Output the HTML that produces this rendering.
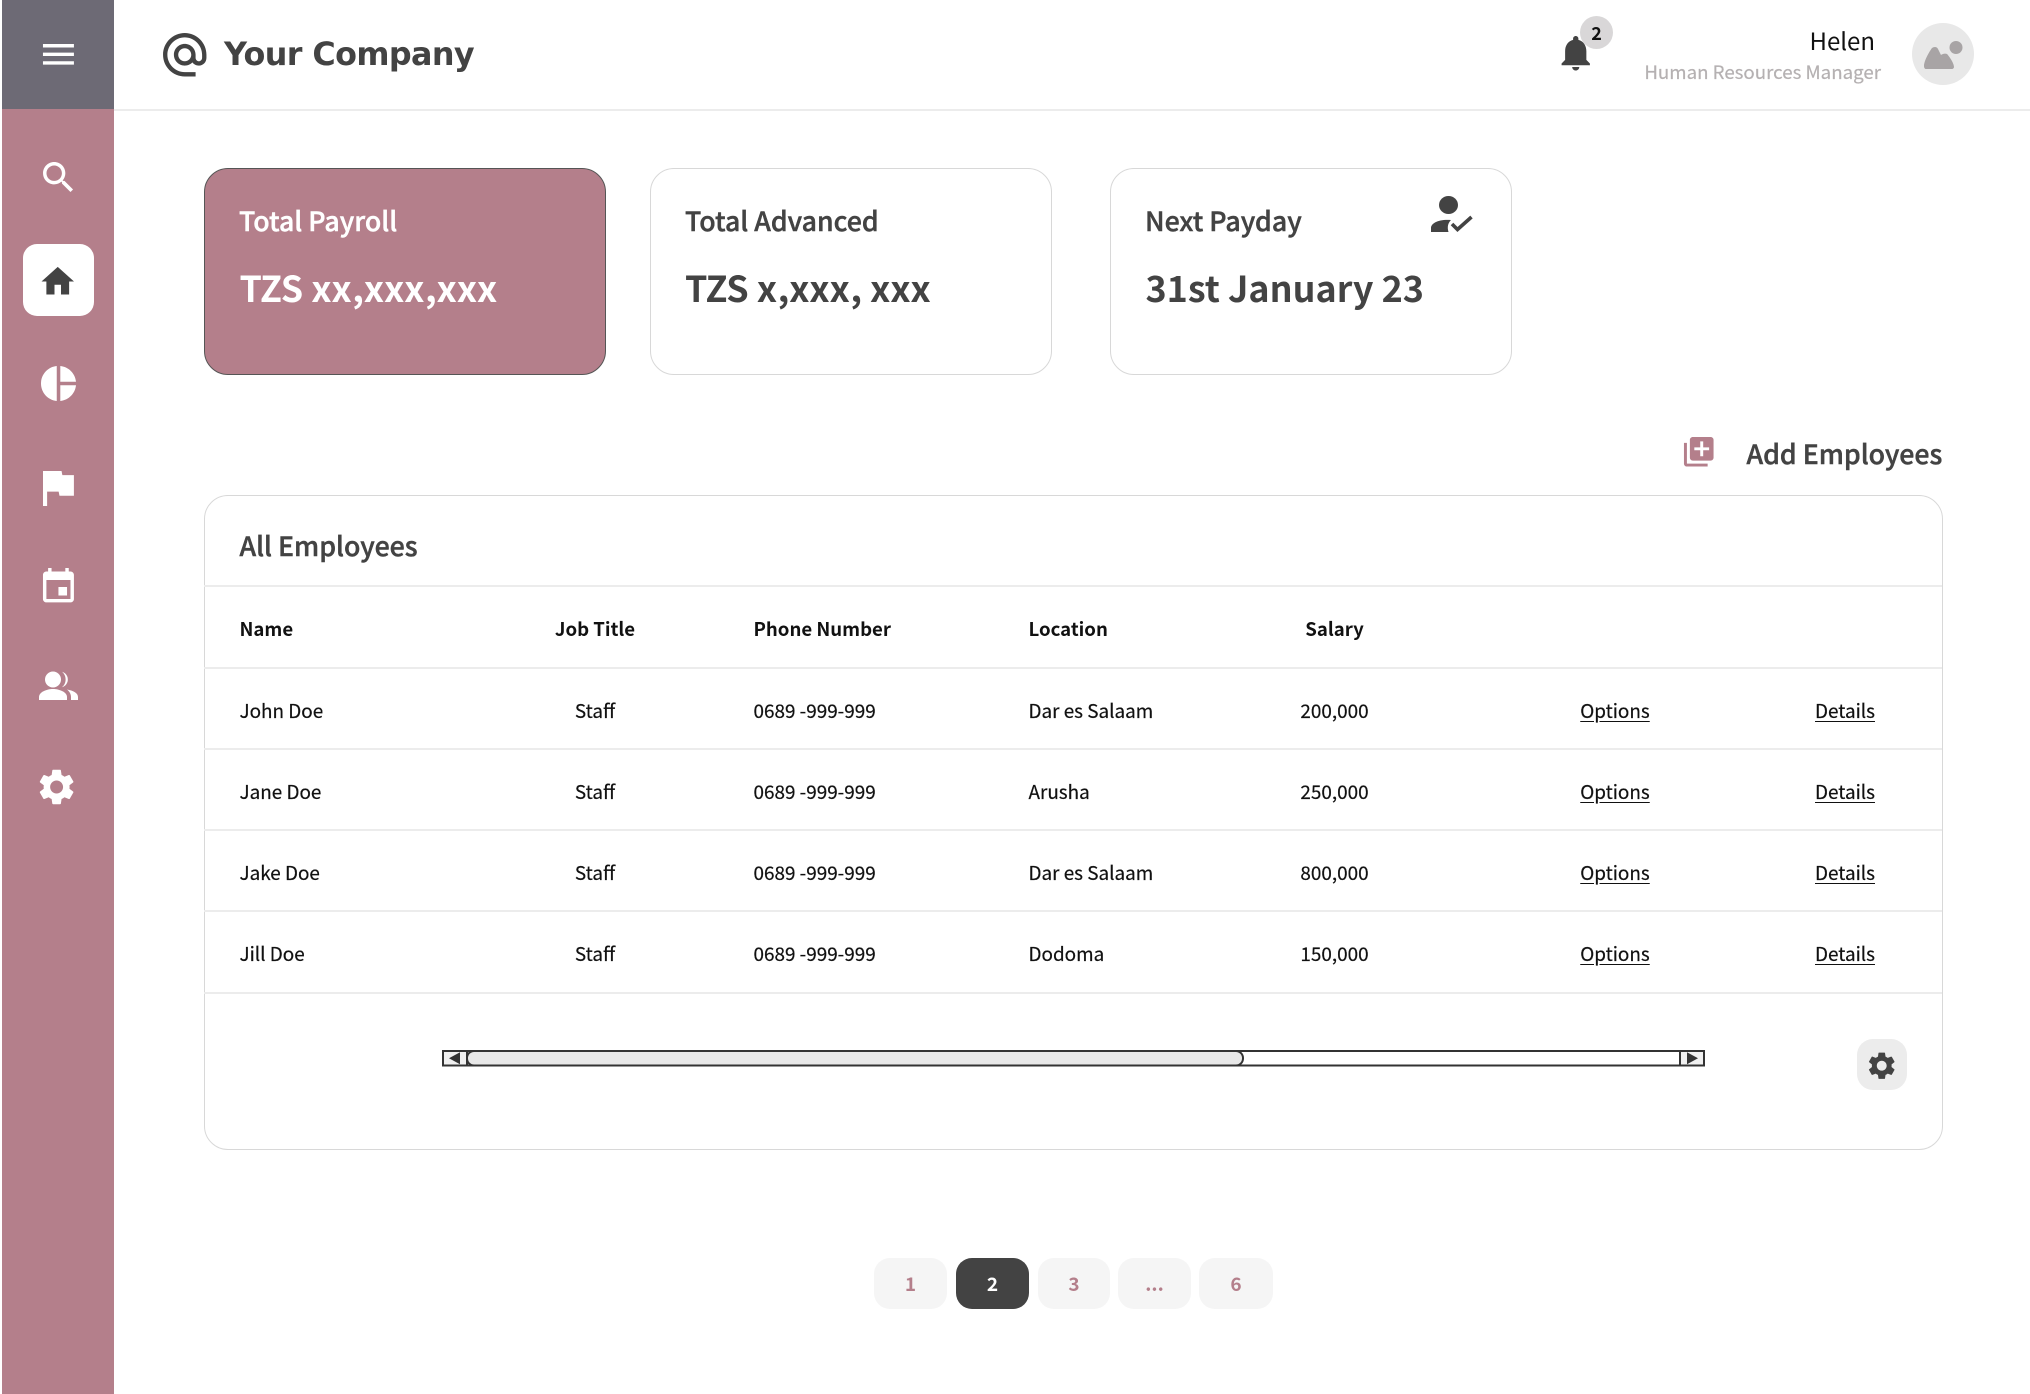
<!DOCTYPE html>
<html lang="en"><head><meta charset="utf-8"><title>Payroll</title>
<style>
html,body{margin:0;padding:0;background:#fff}
#p{position:relative;width:2030px;height:1394px;overflow:hidden;background:#fff;font-family:"Liberation Sans","Noto Sans CJK JP",sans-serif}
#p div{position:absolute;box-sizing:border-box}
.t{font-family:"Noto Sans CJK JP","Liberation Sans",sans-serif;line-height:1;white-space:nowrap;color:#111}
.c{transform:translateX(-50%)}
.h{font-size:26.7px;color:#434343;font-weight:500;-webkit-text-stroke:.45px #434343}
.b{font-size:35.900px;color:#434343;font-weight:700}
.r{font-size:18.900px;-webkit-text-stroke:.2px #111}
.hd{font-size:18.6px;font-weight:700}
.u{text-decoration:underline;text-underline-offset:3px}
.card{border:1.5px solid #d8d8d8;border-radius:24px;background:#fff}
.ln{left:203.500px;width:1738px;height:2px;background:#ececec}
.pg{top:1258px;height:51px;border-radius:16px;background:#f5f5f5;color:#b47f8b;font-family:"Noto Sans CJK JP",sans-serif;font-weight:700;font-size:19px;line-height:51px;text-align:center}
</style></head><body><div id="p">
<div style="left:1.500px;top:0;width:112.500px;height:1394px;background:#b47f8b"></div>
<div style="left:1.500px;top:0;width:112.500px;height:109px;background:#6d6a75"></div>
<div style="left:114px;top:109px;width:1916px;height:2px;background:#ececec"></div>
<div style="left:23px;top:244px;width:71px;height:72px;background:#fff;border-radius:14px"></div>

<div class="card" style="left:203.500px;top:168px;width:402px;height:207px;background:#b47f8b;border-color:#555"></div>
<div class="card" style="left:649.500px;top:168px;width:402px;height:206.500px"></div>
<div class="card" style="left:1110px;top:168px;width:402px;height:206.500px"></div>
<div class="card" style="left:203.500px;top:495px;width:1739px;height:655px"></div>
<div class="ln" style="top:584.500px"></div><div class="ln" style="top:667px"></div><div class="ln" style="top:747.500px"></div><div class="ln" style="top:829px"></div><div class="ln" style="top:910px"></div><div class="ln" style="top:992px"></div>

<svg width="2030" height="1394" viewBox="0 0 2030 1394" style="position:absolute;left:0;top:0">
<g fill="#fff">
<path transform="translate(37.8 33.7) scale(1.72)" d="M3 18h18v-2H3v2zm0-5h18v-2H3v2zm0-7v2h18V6H3z"/>
<path transform="translate(37.9 156.9) scale(1.715)" d="M15.5 14h-.79l-.28-.27C15.41 12.59 16 11.11 16 9.5 16 5.91 13.09 3 9.5 3S3 5.91 3 9.5 5.91 16 9.5 16c1.61 0 3.09-.59 4.23-1.57l.27.28v.79l5 4.99L20.49 19l-4.99-5zm-6 0C7.01 14 5 11.99 5 9.5S7.01 5 9.5 5 14 7.01 14 9.5 11.99 14 9.5 14z"/>
<path transform="translate(37.5 362.5) scale(1.75)" d="M11 2v20c-5.07-.5-9-4.79-9-10s3.93-9.5 9-10zm2.03 0v8.99H22c-.47-4.74-4.24-8.52-8.97-8.99zm0 11.01V22c4.74-.47 8.5-4.25 8.97-8.99h-8.97z"/>
<path transform="translate(32.7 462.8) scale(2.06)" d="M14.4 6L14 4H5v17h2v-7h5.6l.4 2h7V6z"/>
<path transform="translate(37.8 566.3) scale(1.72)" d="M17 12h-5v5h5v-5zM16 1v2H8V1H6v2H5c-1.11 0-1.99.9-1.99 2L3 19c0 1.1.89 2 2 2h14c1.1 0 2-.9 2-2V5c0-1.1-.9-2-2-2h-1V1h-2zm3 18H5V8h14v11z"/>
<circle cx="53" cy="679.5" r="8"/>
<path d="M39 700v-3c0-5 8-8 14-8s14 3 14 8v3z"/>
<path d="M62 671.8a8 8 0 0 1 0 15.4c2.4-2 3.6-4.6 3.6-7.7s-1.2-5.7-3.6-7.7zM67 689.5c6 1 11 3.500 11 7.500v3h-7v-3c0-3-1.500-5.500-4-7.500z"/>
<path transform="translate(35 765.4) scale(1.8)" d="M19.14 12.94c.04-.3.06-.61.06-.94 0-.32-.02-.64-.07-.94l2.03-1.58c.18-.14.23-.41.12-.61l-1.92-3.32c-.12-.22-.37-.29-.59-.22l-2.39.96c-.5-.38-1.03-.7-1.62-.94l-.36-2.54c-.04-.24-.24-.41-.48-.41h-3.84c-.24 0-.43.17-.47.41l-.36 2.54c-.59.24-1.13.57-1.62.94l-2.39-.96c-.22-.08-.47 0-.59.22L2.74 8.87c-.12.21-.08.47.12.61l2.03 1.58c-.05.3-.09.63-.09.94s.02.64.07.94l-2.03 1.58c-.18.14-.23.41-.12.61l1.92 3.32c.12.22.37.29.59.22l2.39-.96c.5.38 1.03.7 1.62.94l.36 2.54c.05.24.24.41.48.41h3.84c.24 0 .44-.17.47-.41l.36-2.54c.59-.24 1.13-.56 1.62-.94l2.39.96c.22.08.47 0 .59-.22l1.92-3.32c.12-.22.07-.47-.12-.61l-2.01-1.58zM12 15.6c-1.98 0-3.6-1.62-3.6-3.6s1.62-3.6 3.6-3.6 3.6 1.62 3.6 3.6-1.62 3.6-3.6 3.6z"/>
</g>
<g fill="#434343">
<path transform="translate(38.25 262) scale(1.625)" d="M10 20v-6h4v6h5v-8h3L12 3 2 12h3v8z"/>
<path transform="translate(158.7 28.700) scale(2.17)" d="M12 2C6.48 2 2 6.48 2 12s4.48 10 10 10h5v-2h-5c-4.34 0-8-3.66-8-8s3.66-8 8-8 8 3.66 8 8v1.43c0 .79-.71 1.57-1.5 1.57s-1.5-.78-1.5-1.57V12c0-2.76-2.24-5-5-5s-5 2.24-5 5 2.24 5 5 5c1.38 0 2.64-.56 3.54-1.47.65.89 1.77 1.47 2.96 1.47 1.97 0 3.5-1.6 3.5-3.57V12c0-5.52-4.48-10-10-10zm0 13c-1.66 0-3-1.34-3-3s1.34-3 3-3 3 1.34 3 3-1.34 3-3 3z"/>
<path transform="translate(1554.500 31.600) scale(1.77)" d="M12 22c1.1 0 2-.9 2-2h-4c0 1.1.89 2 2 2zm6-6v-5c0-3.07-1.64-5.64-4.5-6.32V4c0-.83-.67-1.5-1.5-1.5s-1.5.67-1.5 1.5v.68C7.63 5.36 6 7.92 6 11v5l-2 2v1h16v-1l-2-2z"/>
<ellipse cx="1448.500" cy="205" rx="9.500" ry="9"/>
<path d="M1431 232v-4c0-5 8-9 20-8-3 3-4 7-2.500 12z"/>
<path d="M1452 224l5.500 5.500 14-12.500" fill="none" stroke="#434343" stroke-width="3.600"/>
</g>
<path fill="#b47f8b" transform="translate(1681 434) scale(1.48)" d="M4 6H2v14c0 1.100.9 2 2 2h14v-2H4V6zm16-4H8c-1.100 0-2 .9-2 2v12c0 1.100.9 2 2 2h12c1.100 0 2-.9 2-2V4c0-1.100-.9-2-2-2zm-1 9h-4v4h-2v-4H9V9h4V5h2v4h4v2z"/>
<circle cx="1596.500" cy="32.500" r="16.500" fill="#d9d7d8"/>
<circle cx="1943" cy="54" r="31" fill="#e8e8e8"/>
<g fill="#a8a4a5"><circle cx="1956" cy="47.500" r="6.500"/><path d="M1924 66c0-5 5-14 8-18 2-1.500 5-1.500 6 1l3 6c1-1 4-2 6-1 2 2 7 9 7 13 0 1-1 2-2 2h-26c-1 0-2-1-2-3z"/></g>
<rect x="1857" y="1039" width="50" height="51" rx="16" fill="#ececec"/>
<path fill="#434343" transform="translate(1865.3 1049.300) scale(1.37)" d="M19.14 12.94c.04-.3.06-.61.06-.94 0-.32-.02-.64-.07-.94l2.03-1.58c.18-.14.23-.41.12-.61l-1.92-3.32c-.12-.22-.37-.29-.59-.22l-2.39.96c-.5-.38-1.03-.7-1.62-.94l-.36-2.54c-.04-.24-.24-.41-.48-.41h-3.84c-.24 0-.43.17-.47.41l-.36 2.54c-.59.24-1.13.57-1.62.94l-2.39-.96c-.22-.08-.47 0-.59.22L2.74 8.87c-.12.21-.08.47.12.61l2.03 1.58c-.05.3-.09.63-.09.94s.02.64.07.94l-2.03 1.58c-.18.14-.23.41-.12.61l1.92 3.32c.12.22.37.29.59.22l2.39-.96c.5.38 1.03.7 1.62.94l.36 2.54c.05.24.24.41.48.41h3.84c.24 0 .44-.17.47-.41l.36-2.54c.59-.24 1.13-.56 1.62-.94l2.39.96c.22.08.47 0 .59-.22l1.92-3.32c.12-.22.07-.47-.12-.61l-2.01-1.58zM12 15.6c-1.98 0-3.6-1.62-3.6-3.6s1.62-3.6 3.6-3.6 3.6 1.62 3.6 3.6-1.62 3.6-3.6 3.6z"/>
<!-- scrollbar -->
<rect x="443" y="1051" width="1261" height="14.500" fill="#fff" stroke="#333" stroke-width="2"/>
<rect x="443" y="1051" width="24" height="14.500" fill="#f0f0f0" stroke="#333" stroke-width="2"/>
<rect x="1680" y="1051" width="24" height="14.500" fill="#f0f0f0" stroke="#333" stroke-width="2"/>
<path d="M449 1058.300l11-6v12z M1698 1058.300l-11-6v12z" fill="#333"/>
<rect x="467" y="1051" width="776" height="14.500" rx="7" fill="#e8e8e8" stroke="#333" stroke-width="2"/>
</svg>

<div class="t" style="left:224px;top:37px;font-family:'DejaVu Sans',sans-serif;font-weight:700;font-size:31.800px;color:#434343;line-height:36px;letter-spacing:-.6px">Your Company</div>
<div class="t" style="right:155px;top:28px;font-size:24px">Helen</div>
<div class="t" style="right:149px;top:63px;font-size:18.700px;color:#b5b1b2;-webkit-text-stroke:.2px #b5b1b2">Human Resources Manager</div>
<div class="t c" style="left:1596.500px;top:24px;font-size:18px;font-weight:700">2</div>

<div class="t h" style="left:239px;top:207px;color:#fff;-webkit-text-stroke:.45px #fff">Total Payroll</div>
<div class="t b" style="left:239.500px;top:269.500px;color:#fff">TZS xx,xxx,xxx</div>
<div class="t h" style="left:685px;top:207px">Total Advanced</div>
<div class="t b" style="left:685px;top:269.500px">TZS x,xxx, xxx</div>
<div class="t h" style="left:1145px;top:207px">Next Payday</div>
<div class="t b" style="left:1145.500px;top:269.500px">31st January 23</div>
<div class="t h" style="left:1746.500px;top:440px">Add Employees</div>
<div class="t h" style="left:239.500px;top:532px">All Employees</div>

<div class="t hd" style="left:239.500px;top:620px">Name</div>
<div class="t hd c" style="left:595px;top:620px">Job Title</div>
<div class="t hd" style="left:753.500px;top:620px">Phone Number</div>
<div class="t hd" style="left:1028.500px;top:620px">Location</div>
<div class="t hd c" style="left:1334.500px;top:620px">Salary</div>

<div class="t r" style="left:239.500px;top:702px">John Doe</div><div class="t r c" style="left:595px;top:702px">Staff</div><div class="t r" style="left:753.500px;top:702px">0689 -999-999</div><div class="t r" style="left:1028.500px;top:702px">Dar es Salaam</div><div class="t r c" style="left:1334.500px;top:702px">200,000</div><div class="t r c u" style="left:1615px;top:702px">Options</div><div class="t r c u" style="left:1845px;top:702px">Details</div>
<div class="t r" style="left:239.500px;top:783px">Jane Doe</div><div class="t r c" style="left:595px;top:783px">Staff</div><div class="t r" style="left:753.500px;top:783px">0689 -999-999</div><div class="t r" style="left:1028.500px;top:783px">Arusha</div><div class="t r c" style="left:1334.500px;top:783px">250,000</div><div class="t r c u" style="left:1615px;top:783px">Options</div><div class="t r c u" style="left:1845px;top:783px">Details</div>
<div class="t r" style="left:239.500px;top:864px">Jake Doe</div><div class="t r c" style="left:595px;top:864px">Staff</div><div class="t r" style="left:753.500px;top:864px">0689 -999-999</div><div class="t r" style="left:1028.500px;top:864px">Dar es Salaam</div><div class="t r c" style="left:1334.500px;top:864px">800,000</div><div class="t r c u" style="left:1615px;top:864px">Options</div><div class="t r c u" style="left:1845px;top:864px">Details</div>
<div class="t r" style="left:239.500px;top:945px">Jill Doe</div><div class="t r c" style="left:595px;top:945px">Staff</div><div class="t r" style="left:753.500px;top:945px">0689 -999-999</div><div class="t r" style="left:1028.500px;top:945px">Dodoma</div><div class="t r c" style="left:1334.500px;top:945px">150,000</div><div class="t r c u" style="left:1615px;top:945px">Options</div><div class="t r c u" style="left:1845px;top:945px">Details</div>

<div class="pg" style="left:874px;width:73px">1</div>
<div class="pg" style="left:956px;width:73px;background:#434343;color:#fff">2</div>
<div class="pg" style="left:1038px;width:72px">3</div>
<div class="pg" style="left:1118px;width:73px">...</div>
<div class="pg" style="left:1199px;width:74px">6</div>
</div></body></html>
